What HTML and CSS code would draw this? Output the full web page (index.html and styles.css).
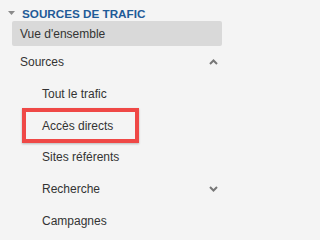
FILE: index.html
```html
<!DOCTYPE html>
<html lang="fr">
<head>
<meta charset="utf-8">
<link rel="stylesheet" href="styles.css">
</head>
<body>
<nav class="sidebar">
  <div class="section-title">
    <svg class="caret" width="8" height="4" viewBox="0 0 8 4"><path d="M0 0h7L3.5 4z" fill="#8a8a8a"/></svg>
    <span>SOURCES DE TRAFIC</span>
  </div>
  <div class="item active">Vue d'ensemble</div>
  <div class="item group">
    <span>Sources</span>
    <svg class="chev" width="9" height="6" viewBox="0 0 9 6"><path d="M1 5L4.5 1.5L8 5" fill="none" stroke="#777" stroke-width="2"/></svg>
  </div>
  <div class="sub">
    <div class="subitem">Tout le trafic</div>
    <div class="subitem highlighted">Accès directs</div>
    <div class="subitem">Sites référents</div>
    <div class="subitem group">
      <span>Recherche</span>
      <svg class="chev" width="9" height="6" viewBox="0 0 9 6"><path d="M1 1L4.5 4.5L8 1" fill="none" stroke="#777" stroke-width="2"/></svg>
    </div>
    <div class="subitem">Campagnes</div>
  </div>
</nav>
</body>
</html>
```

FILE: styles.css
```css
html, body {
  margin: 0;
  padding: 0;
  background: #f4f4f4;
}
body {
  font-family: "Liberation Sans", Arial, sans-serif;
  color: #333;
  width: 224px;
  height: 236px;
  overflow: hidden;
}
.sidebar {
  padding-top: 5px;
}
.section-title {
  display: flex;
  align-items: center;
  height: 16px;
  padding-left: 8px;
  font-size: 11.7px;
  font-weight: bold;
  color: #1f5b98;
}
.caret {
  margin-right: 6px;
}
.item {
  display: flex;
  align-items: center;
  justify-content: space-between;
  font-size: 12px;
  color: #333;
  margin-left: 12px;
  margin-right: 2px;
  padding-left: 8px;
  padding-right: 4px;
  height: 25px;
}
.item.active {
  background: #d9d9d9;
  border-radius: 2px;
}
.item.group {
  height: 32px;
}
.sub {
  display: flex;
  flex-direction: column;
}
.subitem {
  display: flex;
  align-items: center;
  justify-content: space-between;
  font-size: 12px;
  color: #333;
  height: 32px;
  padding-left: 42px;
  padding-right: 6px;
}
.subitem.highlighted {
  margin-left: 22px;
  width: 117px;
  box-sizing: border-box;
  padding-left: 16px;
  border: 4px solid #ef4846;
  box-shadow: 0 1px 2px rgba(0,0,0,0.25);
  height: 35px;
  margin-top: -2px;
  margin-bottom: -2px;
}
```
